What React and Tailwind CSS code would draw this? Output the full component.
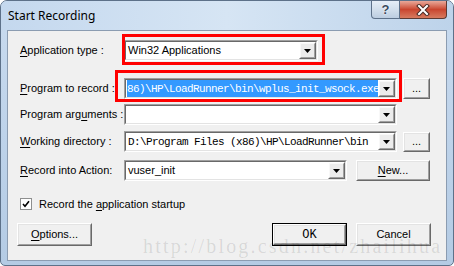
import React from "react";

const SANS = "font-['Liberation_Sans',Arial,sans-serif]";
const MONO = "font-['Liberation_Mono','Courier_New',monospace]";

const U = ({ children }) => (
  <span className="underline decoration-1 underline-offset-[2px]">{children}</span>
);

const Arrow = () => (
  <svg width="7" height="4" viewBox="0 0 7 4">
    <path d="M0 0h7L3.5 4z" fill="#000" />
  </svg>
);

const DropButton = () => (
  <div className="w-[17px] h-full border border-t-white border-l-white border-r-[#696969] border-b-[#696969] bg-[#ececec]">
    <div className="w-full h-full border border-t-[#f8f8f8] border-l-[#f8f8f8] border-r-[#a0a0a0] border-b-[#a0a0a0] flex items-center justify-center">
      <Arrow />
    </div>
  </div>
);

const Combo = ({ className = "", children }) => (
  <div
    className={`h-[21px] border border-t-[#a0a0a0] border-l-[#a0a0a0] border-r-white border-b-white ${className}`}
  >
    <div className="h-full border border-t-[#696969] border-l-[#696969] border-r-[#e3e3e3] border-b-[#e3e3e3] bg-white flex items-center">
      <div className="flex-1 min-w-0 overflow-hidden whitespace-nowrap pl-[1px] text-[11px] text-black">
        {children}
      </div>
      <DropButton />
    </div>
  </div>
);

const Button = ({ className = "", isDefault, children }) => (
  <div className={`${className} ${isDefault ? "border border-black" : ""}`}>
    <div className="h-full border border-t-white border-l-white border-r-[#696969] border-b-[#696969] bg-[#f0f0f0]">
      <div className="h-full border border-t-[#e3e3e3] border-l-[#e3e3e3] border-r-[#a0a0a0] border-b-[#a0a0a0] flex items-center justify-center text-[11px] text-black">
        {children}
      </div>
    </div>
  </div>
);

const Label = ({ children }) => (
  <div className="w-[104px] text-[11px] text-black whitespace-nowrap">{children}</div>
);

export default function App() {
  return (
    <div className={`w-[454px] h-[266px] bg-white ${SANS}`}>
      <div className="relative w-[454px] h-[266px] rounded-t-[7px] rounded-b-[5px] border border-[#5d7189] bg-gradient-to-b from-[#c9dbef] via-[#bed3ea] to-[#b4cbe4] flex flex-col overflow-hidden">
        {/* title bar */}
        <div className="h-[29px] flex items-start justify-between pl-[7px] pr-[6px] bg-gradient-to-r from-[#c4d8ee] via-[#d6e5f4] to-[#bdd3ea]">
          <div className="pt-[7px] leading-[16px] text-[12px] text-black font-['Noto_Sans',sans-serif]">
            Start Recording
          </div>
          <div className="flex">
            <div className="w-[29px] h-[18px] border border-[#5d7189] border-t-0 rounded-bl-[4px] bg-gradient-to-b from-[#e6eef7] via-[#d2dfec] to-[#bccde0] flex items-center justify-center">
              <span className="text-[13px] font-bold leading-none text-[#3a4a5e] [text-shadow:0_0_1px_#fff,0_0_2px_#fff]">
                ?
              </span>
            </div>
            <div className="w-[47px] h-[18px] border border-l-0 border-t-0 border-[#5d3a33] rounded-br-[4px] bg-gradient-to-b from-[#e8a89a] via-[#c9452f] to-[#d77a5f] flex items-center justify-center">
              <svg width="14" height="12" viewBox="0 0 14 12">
                <path d="M3 2l8 8M11 2l-8 8" stroke="#4a2a24" strokeWidth="4" strokeLinecap="square" />
                <path d="M3 2l8 8M11 2l-8 8" stroke="#fff" strokeWidth="2" strokeLinecap="square" />
              </svg>
            </div>
          </div>
        </div>

        {/* client area */}
        <div className="relative mx-[6px] h-[231px] border border-[#8b9cb1] bg-[#f0f0f0] pt-[9px] pl-[12px] pr-[15px] flex flex-col">
          <div className="flex items-center">
            <Label>
              <U>A</U>pplication type :
            </Label>
            <Combo className="w-[194px]">
              <span className="pl-[1px]">Win32 Applications</span>
            </Combo>
          </div>

          <div className="flex items-center mt-[17px]">
            <Label>
              <U>P</U>rogram to record :
            </Label>
            <Combo className="w-[273px]">
              <span
                className={`inline-flex items-center h-[17px] bg-[#3399ff] text-white text-[11px] tracking-[-0.6px] ${MONO}`}
              >
                86)\HP\LoadRunner\bin\wplus_init_wsock.exe
              </span>
            </Combo>
            <Button className="ml-[6px] w-[27px] h-[21px]">...</Button>
          </div>

          <div className="flex items-center mt-[5px]">
            <Label>
              Program arg<U>u</U>ments :
            </Label>
            <Combo className="w-[273px]" />
          </div>

          <div className="flex items-center mt-[6px]">
            <Label>
              <U>W</U>orking directory :
            </Label>
            <Combo className="w-[273px]">
              <span className={`pl-[1px] text-[11px] tracking-[-0.6px] ${MONO}`}>
                D:\Program Files (x86)\HP\LoadRunner\bin
              </span>
            </Combo>
            <Button className="ml-[6px] w-[27px] h-[20px]">...</Button>
          </div>

          <div className="flex items-center mt-[8px]">
            <Label>
              <U>R</U>ecord into Action:
            </Label>
            <Combo className="w-[223px]">
              <span className="pl-[1px]">vuser_init</span>
            </Combo>
            <Button className="ml-[9px] w-[74px] h-[21px]">
              <U>N</U>ew...
            </Button>
          </div>

          <div className="flex items-center mt-[17px] h-[12px]">
            <div className="w-[12px] h-[12px] border border-[#8e8f8f] bg-white flex items-center justify-center">
              <svg width="8" height="8" viewBox="0 0 8 8">
                <path d="M1 4l2 2.2L7 1.2" stroke="#000" strokeWidth="1.6" fill="none" />
              </svg>
            </div>
            <span className="ml-[7px] text-[11px] text-black">
              Record the <U>a</U>pplication startup
            </span>
          </div>

          <div className="flex items-center mt-[13px] -ml-[3px]">
            <Button className="w-[75px] h-[23px]">
              <U>O</U>ptions...
            </Button>
            <div className="flex-1" />
            <Button isDefault className="w-[75px] h-[23px]">
              <span className={`text-[12px] ${MONO}`}>OK</span>
            </Button>
            <Button className="ml-[9px] w-[75px] h-[23px]">Cancel</Button>
          </div>

          {/* red annotation boxes */}
          <div className="absolute left-[114px] top-[3px] w-[203px] h-[31px] border-[3px] border-[#ff0000] pointer-events-none" />
          <div className="absolute left-[107px] top-[39px] w-[287px] h-[32px] border-[3px] border-[#ff0000] pointer-events-none" />
        </div>

        {/* watermark */}
        <div className="absolute left-[142px] top-[235px] leading-[20px] text-[20px] tracking-[2.2px] text-black/[0.11] font-['Liberation_Serif',serif] pointer-events-none whitespace-nowrap">
          http://blog.csdn.net/zhailihua
        </div>
      </div>
    </div>
  );
}
